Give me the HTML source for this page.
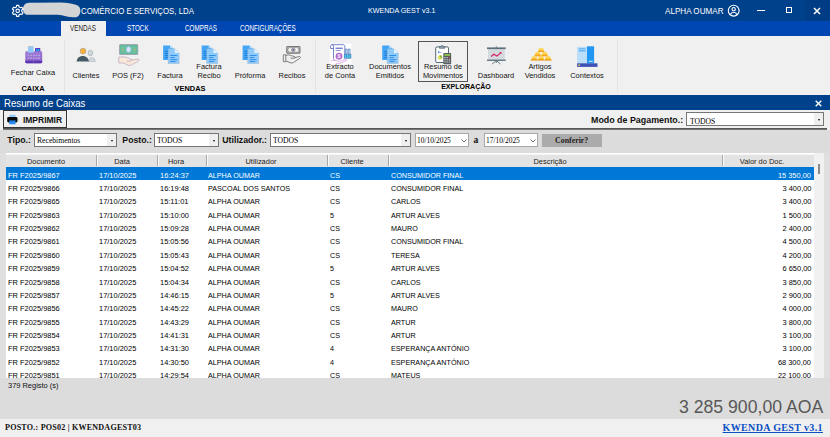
<!DOCTYPE html>
<html lang="pt">
<head>
<meta charset="utf-8">
<title>KWENDA GEST v3.1</title>
<style>
*{box-sizing:border-box;margin:0;padding:0}
html,body{width:830px;height:437px;overflow:hidden;background:#f0f0f0}
body{position:relative;font-family:"Liberation Sans",Arial,sans-serif;color:#1a1a1a}
.abs{position:absolute}
.t{position:absolute;white-space:nowrap;line-height:1}
#title{left:0;top:0;width:830px;height:21px;background:#00418b}
#tabs{left:0;top:21px;width:830px;height:15px;background:#0047b3}
#ribbon{left:0;top:36px;width:830px;height:59px;background:#f0f0f0}
#hdr2{left:0;top:95px;width:830px;height:15px;background:#00418b}
#tool{left:0;top:110px;width:830px;height:20px;background:#f0f0f0}
#filter{left:0;top:130px;width:830px;height:23px;background:#dcdcdc}
#tablewrap{left:0;top:153px;width:830px;height:225px;background:#dfdfdf;overflow:hidden}
#table{left:6px;top:0;width:807.6px;height:225px;background:#fff}
#foot{left:0;top:378px;width:830px;height:41px;background:#dcdcdc}
#status{left:0;top:419px;width:830px;height:18px;background:#f0f0f0}
.tt{color:#fff;font-size:8.5px;top:6.9px;transform-origin:0 50%;transform:scaleX(.925)}
.tab{color:#fff;font-size:8.7px;top:24.3px;transform-origin:0 0;transform:scaleX(.726)}
.rl{font-size:7.9px;color:#141414;text-align:center;line-height:9.4px;transform:translateX(-50%) scaleX(.945);white-space:nowrap;position:absolute}
.gl{font-size:8px;font-weight:bold;color:#000;position:absolute;white-space:nowrap;line-height:1;transform:translateX(-50%) scaleX(.925)}
.vsep{position:absolute;top:39px;height:54px;width:1px;background:#e4e4e4}
.row{position:absolute;left:0;width:807.6px;height:13.37px;font-size:8.1px;color:#000}
.row span{position:absolute;top:4.8px;white-space:nowrap;line-height:1;transform-origin:0 50%;transform:scaleX(.92)}
.row span.u{transform:scaleX(.888)}
.row .val{right:2.1px;transform-origin:100% 50%}
.row.sel{background:#0078d7;color:#fff}
.th{position:absolute;top:1px;height:13.6px;background:#e5e5e5;border-right:1px solid #fafafa;border-top:1px solid #f8f8f8;box-shadow:inset -1px 0 0 #c8c8c8}
.thl{position:absolute;top:157.6px;font-size:8.1px;color:#222;white-space:nowrap;line-height:1;transform:translateX(-50%) scaleX(.92)}
.combo{position:absolute;background:#fff;border:1px solid #767676;height:13.4px}
.combo.dt{border-color:#a8a8a8}
.combo .btn{position:absolute;right:0;top:0;bottom:0;width:9px;background:#efefef}
.combo .ct{position:absolute;left:1.8px;top:2.3px;font-family:"Liberation Serif","Times New Roman",serif;font-size:8.7px;line-height:1;color:#000;white-space:nowrap;transform-origin:0 50%;transform:scaleX(.88)}
.combo .arr{position:absolute;right:2.8px;top:5.4px;width:0;height:0;border-left:1.8px solid transparent;border-right:1.8px solid transparent;border-top:2.1px solid #111}
.fl{position:absolute;font-weight:bold;font-size:8.75px;color:#111;white-space:nowrap;line-height:1;top:135.8px}
</style>
</head>
<body>
<div class="abs" id="title"></div>
<div class="abs" id="tabs"></div>
<div class="abs" id="ribbon"></div>
<div class="abs" id="hdr2"></div>
<div class="abs" id="tool"></div>
<div class="abs" id="filter"></div>
<div class="abs" id="tablewrap"><div class="abs" id="table">
<div class="row sel" style="top:13.85px"><span style="left:1.6px">FR F2025/9867</span><span style="left:93px">17/10/2025</span><span style="left:154px">16:24:37</span><span class=u style="left:202.2px">ALPHA OUMAR</span><span class=u style="left:324px">CS</span><span class=u style="left:384.5px">CONSUMIDOR FINAL</span><span class="val">15 350,00</span></div>
<div class="row" style="top:27.22px"><span style="left:1.6px">FR F2025/9866</span><span style="left:93px">17/10/2025</span><span style="left:154px">16:19:48</span><span class=u style="left:202.2px">PASCOAL DOS SANTOS</span><span class=u style="left:324px">CS</span><span class=u style="left:384.5px">CONSUMIDOR FINAL</span><span class="val">3 400,00</span></div>
<div class="row" style="top:40.59px"><span style="left:1.6px">FR F2025/9865</span><span style="left:93px">17/10/2025</span><span style="left:154px">15:11:01</span><span class=u style="left:202.2px">ALPHA OUMAR</span><span class=u style="left:324px">CS</span><span class=u style="left:384.5px">CARLOS</span><span class="val">3 400,00</span></div>
<div class="row" style="top:53.96px"><span style="left:1.6px">FR F2025/9863</span><span style="left:93px">17/10/2025</span><span style="left:154px">15:10:00</span><span class=u style="left:202.2px">ALPHA OUMAR</span><span class=u style="left:324px">5</span><span class=u style="left:384.5px">ARTUR ALVES</span><span class="val">1 500,00</span></div>
<div class="row" style="top:67.33px"><span style="left:1.6px">FR F2025/9862</span><span style="left:93px">17/10/2025</span><span style="left:154px">15:09:28</span><span class=u style="left:202.2px">ALPHA OUMAR</span><span class=u style="left:324px">CS</span><span class=u style="left:384.5px">MAURO</span><span class="val">2 400,00</span></div>
<div class="row" style="top:80.70px"><span style="left:1.6px">FR F2025/9861</span><span style="left:93px">17/10/2025</span><span style="left:154px">15:05:56</span><span class=u style="left:202.2px">ALPHA OUMAR</span><span class=u style="left:324px">CS</span><span class=u style="left:384.5px">CONSUMIDOR FINAL</span><span class="val">4 500,00</span></div>
<div class="row" style="top:94.07px"><span style="left:1.6px">FR F2025/9860</span><span style="left:93px">17/10/2025</span><span style="left:154px">15:05:43</span><span class=u style="left:202.2px">ALPHA OUMAR</span><span class=u style="left:324px">CS</span><span class=u style="left:384.5px">TERESA</span><span class="val">4 200,00</span></div>
<div class="row" style="top:107.44px"><span style="left:1.6px">FR F2025/9859</span><span style="left:93px">17/10/2025</span><span style="left:154px">15:04:52</span><span class=u style="left:202.2px">ALPHA OUMAR</span><span class=u style="left:324px">5</span><span class=u style="left:384.5px">ARTUR ALVES</span><span class="val">6 650,00</span></div>
<div class="row" style="top:120.81px"><span style="left:1.6px">FR F2025/9858</span><span style="left:93px">17/10/2025</span><span style="left:154px">15:04:34</span><span class=u style="left:202.2px">ALPHA OUMAR</span><span class=u style="left:324px">CS</span><span class=u style="left:384.5px">CARLOS</span><span class="val">3 850,00</span></div>
<div class="row" style="top:134.18px"><span style="left:1.6px">FR F2025/9857</span><span style="left:93px">17/10/2025</span><span style="left:154px">14:46:15</span><span class=u style="left:202.2px">ALPHA OUMAR</span><span class=u style="left:324px">5</span><span class=u style="left:384.5px">ARTUR ALVES</span><span class="val">2 900,00</span></div>
<div class="row" style="top:147.55px"><span style="left:1.6px">FR F2025/9856</span><span style="left:93px">17/10/2025</span><span style="left:154px">14:45:22</span><span class=u style="left:202.2px">ALPHA OUMAR</span><span class=u style="left:324px">CS</span><span class=u style="left:384.5px">MAURO</span><span class="val">4 000,00</span></div>
<div class="row" style="top:160.92px"><span style="left:1.6px">FR F2025/9855</span><span style="left:93px">17/10/2025</span><span style="left:154px">14:43:29</span><span class=u style="left:202.2px">ALPHA OUMAR</span><span class=u style="left:324px">CS</span><span class=u style="left:384.5px">ARTUR</span><span class="val">3 800,00</span></div>
<div class="row" style="top:174.29px"><span style="left:1.6px">FR F2025/9854</span><span style="left:93px">17/10/2025</span><span style="left:154px">14:41:31</span><span class=u style="left:202.2px">ALPHA OUMAR</span><span class=u style="left:324px">CS</span><span class=u style="left:384.5px">ARTUR</span><span class="val">3 100,00</span></div>
<div class="row" style="top:187.66px"><span style="left:1.6px">FR F2025/9853</span><span style="left:93px">17/10/2025</span><span style="left:154px">14:31:30</span><span class=u style="left:202.2px">ALPHA OUMAR</span><span class=u style="left:324px">4</span><span class=u style="left:384.5px">ESPERANÇA ANTÓNIO</span><span class="val">3 100,00</span></div>
<div class="row" style="top:201.03px"><span style="left:1.6px">FR F2025/9852</span><span style="left:93px">17/10/2025</span><span style="left:154px">14:30:50</span><span class=u style="left:202.2px">ALPHA OUMAR</span><span class=u style="left:324px">4</span><span class=u style="left:384.5px">ESPERANÇA ANTÓNIO</span><span class="val">68 300,00</span></div>
<div class="row" style="top:214.40px"><span style="left:1.6px">FR F2025/9851</span><span style="left:93px">17/10/2025</span><span style="left:154px">14:29:54</span><span class=u style="left:202.2px">ALPHA OUMAR</span><span class=u style="left:324px">CS</span><span class=u style="left:384.5px">MATEUS</span><span class="val">22 100,00</span></div>
<div class="abs" style="left:0;top:0.6px;width:807.5px;height:13.3px;background:#e3e3e3;border-top:1px solid #f6f6f6"></div>
<div class="abs" style="left:89.7px;top:2.2px;width:1px;height:11px;background:#a8a8a8"></div><div class="abs" style="left:90.7px;top:2.2px;width:1px;height:11px;background:#fbfbfb"></div>
<div class="abs" style="left:151.0px;top:2.2px;width:1px;height:11px;background:#a8a8a8"></div><div class="abs" style="left:152.0px;top:2.2px;width:1px;height:11px;background:#fbfbfb"></div>
<div class="abs" style="left:199.5px;top:2.2px;width:1px;height:11px;background:#a8a8a8"></div><div class="abs" style="left:200.5px;top:2.2px;width:1px;height:11px;background:#fbfbfb"></div>
<div class="abs" style="left:321.0px;top:2.2px;width:1px;height:11px;background:#a8a8a8"></div><div class="abs" style="left:322.0px;top:2.2px;width:1px;height:11px;background:#fbfbfb"></div>
<div class="abs" style="left:382.0px;top:2.2px;width:1px;height:11px;background:#a8a8a8"></div><div class="abs" style="left:383.0px;top:2.2px;width:1px;height:11px;background:#fbfbfb"></div>
<div class="abs" style="left:715.5px;top:2.2px;width:1px;height:11px;background:#a8a8a8"></div><div class="abs" style="left:716.5px;top:2.2px;width:1px;height:11px;background:#fbfbfb"></div>
</div>
<div class="abs" style="left:813.6px;top:0;width:10.4px;height:225px;background:#f1f1f1"></div><div class="abs" style="left:824px;top:0;width:6px;height:225px;background:#dfdfdf"></div>
<div class="abs" style="left:818.1px;top:11px;width:1.8px;height:9.6px;background:#8a8a8a"></div>
</div>
<div class="abs" id="foot"></div>
<div class="abs" id="status"></div>

<!-- title bar -->
<svg class="abs" style="left:0;top:0" width="100" height="21" viewBox="0 0 100 21"><path d="M29 2.700L61 2.500C67 2.500 72 3.600 76.500 5C79.500 6 80.600 8.500 80.400 11C80.200 14 78.500 17 76 17.300C72.500 17.600 69 16.800 66 16.200C63 15.500 60.500 14.800 58 14.700L28 14.800C25 14.800 23 12.500 23 9C23 5.500 25.500 2.700 29 2.700Z" fill="#d3d4d6"/><path d="M19.07 6.88L18.77 5.35L16.63 5.35L16.33 6.88L14.94 7.68L13.47 7.18L12.41 9.03L13.58 10.05L13.58 11.65L12.41 12.67L13.47 14.52L14.94 14.02L16.33 14.82L16.63 16.35L18.77 16.35L19.07 14.82L20.46 14.02L21.93 14.52L22.99 12.67L21.82 11.65L21.82 10.05L22.99 9.03L21.93 7.18L20.46 7.68Z" fill="none" stroke="#fff" stroke-width="1.150" stroke-linejoin="round"/><circle cx="17.7" cy="10.85" r="1.750" fill="none" stroke="#fff" stroke-width="1.100"/></svg>
<div class="t tt" style="left:81px">COMÉRCIO E SERVIÇOS, LDA</div>
<div class="t tt" style="left:368.3px;font-size:7.7px;top:7.2px">KWENDA GEST v3.1</div>
<div class="t tt" style="left:664.8px;font-size:8.75px">ALPHA OUMAR</div>
<svg class="abs" style="left:727.2px;top:4.3px" width="13.4" height="13.4" viewBox="0 0 26 26" fill="none" stroke="#fff" stroke-width="2.2"><circle cx="13" cy="13" r="10.5"/><circle cx="13" cy="10" r="3.2"/><path d="M6.500 20.500c1.500-3.500 4-4.500 6.500-4.500s5 1 6.500 4.500"/></svg>
<div class="abs" style="left:756.6px;top:9.8px;width:8px;height:1.6px;background:#fff"></div>
<div class="abs" style="left:785.5px;top:7.4px;width:6.5px;height:6px;border:1.6px solid #fff"></div>
<div class="abs" style="left:804.5px;top:0;width:25.5px;height:21px;background:#003d85"></div>
<svg class="abs" style="left:813.2px;top:6.5px" width="8" height="8" viewBox="0 0 8 8" stroke="#fff" stroke-width="1.500"><path d="M1 1l6 6M7 1l-6 6"/></svg>

<!-- tabs -->
<div class="abs" style="left:61px;top:21px;width:45px;height:15px;background:#f0f0f0"></div>
<div class="t tab" style="left:70px;color:#222">VENDAS</div>
<div class="t tab" style="left:127px">STOCK</div>
<div class="t tab" style="left:184.500px">COMPRAS</div>
<div class="t tab" style="left:240px">CONFIGURAÇÕES</div>

<!-- ribbon -->
<div class="vsep" style="left:64px"></div>
<div class="vsep" style="left:315px"></div>
<div class="vsep" style="left:617px"></div>
<div class="rl" style="left:33px;top:68px">Fechar Caixa</div>
<div class="rl" style="left:85.500px;top:71px">Clientes</div>
<div class="rl" style="left:127.500px;top:71px">POS (F2)</div>
<div class="rl" style="left:170px;top:71px">Factura</div>
<div class="rl" style="left:209px;top:61.600px">Factura<br>Recibo</div>
<div class="rl" style="left:250px;top:71px">Próforma</div>
<div class="rl" style="left:291.500px;top:71px">Recibos</div>
<div class="rl" style="left:340px;top:61.600px">Extracto<br>de Conta</div>
<div class="rl" style="left:390px;top:61.600px">Documentos<br>Emitidos</div>
<div class="abs" style="left:418px;top:41px;width:50px;height:41px;border:1px solid #555"></div>
<div class="rl" style="left:443px;top:61.600px">Resumo de<br>Movimentos</div>
<div class="rl" style="left:495.500px;top:71px">Dashboard</div>
<div class="rl" style="left:540px;top:61.600px">Artigos<br>Vendidos</div>
<div class="rl" style="left:587px;top:70.500px">Contextos</div>
<div class="gl" style="left:33px;top:84.6px">CAIXA</div>
<div class="gl" style="left:189.5px;top:84.6px">VENDAS</div>
<div class="gl" style="left:466px;top:83.4px;transform:translateX(-50%) scaleX(.88)">EXPLORAÇÃO</div>
<svg class="abs" style="left:0;top:36px" width="830" height="58" viewBox="0 36 830 58">
<defs>
<g id="doc">
<path d="M0 0H7L10.100 2.900V14.700H0Z" fill="#42a5f5"/>
<path d="M7 0L10.100 2.900H7Z" fill="#bbdefb"/>
<path d="M2.100 5.900H5M2.100 8H5M2.100 10.100H5M2.100 12.200H5" stroke="#1976d2" stroke-width=".9"/>
<path d="M5 3.400H11.800L16 7.500V18.100H5Z" fill="#90caf9" stroke="#7fa6cc" stroke-width=".35"/>
<path d="M11.800 3.400L16 7.500H11.800Z" fill="#e3f2fd"/>
<path d="M7.200 10.100H14M7.200 12.200H11.600M7.200 14.300H14M7.200 16.200H12.500" stroke="#2f8fe8" stroke-width="1"/>
</g>
<linearGradient id="pg" x1="0" y1="0" x2="0" y2="1"><stop offset="0" stop-color="#9d7ad6"/><stop offset="1" stop-color="#8a62c9"/></linearGradient>
</defs>
<!-- cash register -->
<rect x="28" y="46.300" width="5.500" height="7" fill="#90caf9"/>
<rect x="28" y="46.100" width="5.500" height=".6" fill="#c9b8a8"/>
<rect x="35" y="48.100" width="5.300" height="4" rx=".6" fill="#5e35b1"/>
<rect x="35.900" y="48.900" width="3.600" height="2.200" fill="#2196f3"/>
<path d="M26.500 51.300H28V52.800H33.500V51.300H41C41.700 51.300 42.200 51.800 42.200 52.500V62C42.200 62.700 41.700 63.200 41 63.200H26.500C25.800 63.200 25.300 62.700 25.300 62V52.500C25.300 51.800 25.800 51.300 26.500 51.300Z" fill="url(#pg)"/>
<path d="M25.300 60.800H42.200V62C42.200 62.700 41.700 63.200 41 63.200H26.500C25.800 63.200 25.300 62.700 25.300 62Z" fill="#5e35b1"/>
<rect x="33.450" y="60.800" width=".5" height="2.400" fill="#9d7ad6"/>
<g fill="#b9a3e3"><rect x="27.500" y="54.600" width="1.700" height="1.600"/><rect x="30.200" y="54.600" width="1.700" height="1.600"/><rect x="32.900" y="54.600" width="1.700" height="1.600"/><rect x="35.600" y="54.600" width="1.700" height="1.600"/><rect x="38.300" y="54.600" width="1.700" height="1.600"/><rect x="27.500" y="57.400" width="1.700" height="1.600"/><rect x="30.200" y="57.400" width="1.700" height="1.600"/><rect x="32.900" y="57.400" width="1.700" height="1.600"/><rect x="35.600" y="57.400" width="1.700" height="1.600"/><rect x="38.300" y="57.400" width="1.700" height="1.600"/></g>
<!-- clientes -->
<path d="M88.500 61.500C88.500 59.300 90 57.600 91.800 57.600C93.800 57.600 95.300 59.300 95.300 61.500Z" fill="#cfd8dc" stroke="#9aa5ab" stroke-width=".4"/>
<ellipse cx="90.400" cy="53" rx="2.400" ry="2.800" fill="#cfd8dc" stroke="#8f989d" stroke-width=".5"/>
<path d="M76.600 61.600C76.600 58.300 79.300 55.900 82.700 55.900C86.100 55.900 88.800 58.300 88.800 61.600Z" fill="#455a64"/>
<circle cx="83" cy="51.100" r="2.900" fill="#fbb03b" stroke="#8f8f8f" stroke-width=".5"/>
<!-- POS -->
<rect x="119.500" y="44.500" width="18.300" height="10" rx=".6" fill="#69c1a1" stroke="#9b8aa6" stroke-width=".6"/>
<rect x="120.700" y="45.600" width="15.900" height="7.800" fill="none" stroke="#4fa98a" stroke-width=".5" stroke-dasharray="1 .6"/>
<ellipse cx="128.600" cy="49.500" rx="2.300" ry="3" fill="#d6e6ff" stroke="#8fb0dd" stroke-width=".5"/>
<circle cx="122.600" cy="49.800" r=".8" fill="#e8a24a"/><circle cx="134.800" cy="49.800" r=".8" fill="#e8a24a"/>
<path d="M118.800 57.100L124.500 56.900C126.500 57 128 58 129.500 58.700C130.500 59.200 131.800 59.300 132.200 60L137.500 59.200C138.600 59 139.300 59.800 139 60.500C138.800 61 138.400 61.200 137.800 61.500L130.500 65.400C129.600 65.800 128.800 65.600 128 65.200L123.500 63L118.800 63Z" fill="#f9e8d8" stroke="#a590b3" stroke-width=".55" stroke-linejoin="round"/><path d="M132.200 60C131.500 61 129 61.300 126.800 61.200" fill="none" stroke="#a97fc0" stroke-width=".55"/>
<!-- docs -->
<use href="#doc" x="163.100" y="45.400"/>
<use href="#doc" x="201.700" y="45.400"/>
<use href="#doc" x="242.600" y="45.400"/>
<use href="#doc" x="382.200" y="45.400"/>
<!-- recibos -->
<g fill="none" stroke="#5a5a5a" stroke-width=".75">
<rect x="286.700" y="46.500" width="13.300" height="6.800" rx=".4" fill="#b4b4b4"/>
<rect x="287.900" y="47.600" width="10.900" height="4.600" rx="2.200" stroke-width=".4" fill="#f4f4f4"/>
<ellipse cx="293.300" cy="49.900" rx="1.900" ry="1.700" stroke-width=".5" fill="#c9c9c9"/>
<rect x="283.300" y="54.700" width="2.500" height="7" rx=".4"/>
<path d="M285.800 55.500C287.500 54.800 289 54.700 290.500 55.400C292 56 294 56.200 294.800 56.700C295.500 57.300 295 58.200 294 58.200H290.500M294.800 57.800L298.500 56.600C299.800 56.200 300.600 56.700 300.500 57.500C300.400 58 299.500 58.600 298 59.400L293.500 62.500C292.700 63.100 291.700 63.200 290.800 62.900L285.800 61"/>
</g>
<circle cx="293.300" cy="49.900" r=".8" fill="#3949ab"/>
<!-- extracto -->
<rect x="329.800" y="43.600" width="21.600" height="20.600" fill="#fff"/>
<g fill="none" stroke-width=".7">
<path d="M333.500 58.500V46.200C333.500 45.200 332.800 44.700 332 44.700C331.200 44.700 330.600 45.300 330.600 46.200V48.500H333.500" stroke="#3f51b5"/>
<path d="M332 44.700H343.200C344.200 44.700 344.800 45.400 344.800 46.300V58" stroke="#3f51b5"/>
<path d="M335.500 48.200H342.800" stroke="#3f51b5" stroke-width="1"/><path d="M335.500 50.500H340.500" stroke="#5c6bc0"/>
<path d="M333.500 58.500C333.500 59.300 334 59.800 334.800 59.800" stroke="#7e57c2"/>
<path d="M330.800 61.200C333 60 335.500 60.200 337.500 61C339 61.500 341 61.300 342.500 60.600L346.500 58.900M335.500 63.300C338 63.800 341 63.300 343.500 62L347.200 59.800" stroke="#ce7fd6" stroke-width=".6"/>
</g>
<circle cx="339" cy="56.200" r="3.100" fill="#bf7fd6" stroke="#9c3fb8" stroke-width=".6"/>
<text x="339" y="58.100" font-size="5" font-weight="bold" text-anchor="middle" fill="#f3e5f5" font-family="Liberation Sans,sans-serif">$</text>
<path d="M344.300 54.200H351V58.300H344.300Z" fill="#4dd0e1" stroke="#3f51b5" stroke-width=".5"/>
<path d="M345.400 49H347.200V54.200H345.400ZM348.300 49H350.100V54.200H348.300Z" fill="#b2ebf2" stroke="#3f51b5" stroke-width=".5"/>
<path d="M346.500 54.800V57.800M348.800 54.800V57.800" stroke="#3f51b5" stroke-width=".5"/>
<!-- resumo de movimentos -->
<rect x="435.700" y="46.900" width="12.800" height="15.600" rx="1.200" fill="#fff" stroke="#455a64" stroke-width=".9"/>
<path d="M439.500 48.300V46.600H440.800C440.800 45.200 443.400 45.200 443.400 46.600H444.700V48.300Z" fill="#90a4ae" stroke="#455a64" stroke-width=".6"/>
<path d="M438.500 51.200V53M439.800 51.800V53M441 52.400V53" stroke="#1e6fe0" stroke-width=".8"/>
<circle cx="440" cy="57.400" r="2.200" fill="#d4e157"/><path d="M440 57.400V55.200A2.200 2.200 0 0 1 442.200 57.400Z" fill="#7cb342"/>
<rect x="443.300" y="53" width="7.800" height="11.300" rx=".8" fill="#555b5e"/>
<rect x="444.300" y="54" width="5.800" height="1.900" fill="#8bc34a"/>
<g fill="#cfd4d6"><rect x="444.300" y="57" width="1.300" height="1.200"/><rect x="446.500" y="57" width="1.300" height="1.200"/><rect x="444.300" y="59.200" width="1.300" height="1.200"/><rect x="446.500" y="59.200" width="1.300" height="1.200"/><rect x="448.700" y="59.200" width="1.300" height="1.200"/><rect x="444.300" y="61.400" width="1.300" height="1.200"/><rect x="446.500" y="61.400" width="1.300" height="1.200"/><rect x="448.700" y="61.400" width="1.300" height="1.200"/></g>
<rect x="448.700" y="57" width="1.300" height="1.200" fill="#e53935"/>
<!-- dashboard -->
<path d="M496.300 60.500L492.200 64M496.300 60.500L500.500 64M496.300 60.500V63" stroke="#455a64" stroke-width=".8" fill="none"/>
<rect x="495.800" y="46.500" width="1" height="1.200" fill="#455a64"/>
<rect x="488" y="48.800" width="16.800" height="11.200" fill="#d3dade"/>
<rect x="487" y="47.400" width="18.700" height="1.700" fill="#5a717c"/>
<rect x="487" y="59.600" width="18.700" height="1.300" fill="#5a717c"/>
<path d="M491.100 56.400L493.900 54.300L496.900 56.100L500.600 52.900" fill="none" stroke="#d81b60" stroke-width="1.200"/>
<path d="M499.300 52.200L501.600 52L501.300 54.300Z" fill="#d81b60"/>
<!-- gold bars -->
<g stroke="#fff8e1" stroke-width=".35">
<path d="M539.100 48.100H543.200L544.500 52.100H537.800Z" fill="#fbc02d"/>
<path d="M535.600 52.100H539.800L541.100 56.300H534.300Z" fill="#fbc02d"/>
<path d="M542.500 52.100H546.700L548 56.300H541.200Z" fill="#fbc02d"/>
<path d="M532.100 56.300H536.300L537.700 60.400H530.800Z" fill="#fbc02d"/>
<path d="M539 56.300H543.200L544.600 60.400H537.700Z" fill="#fbc02d"/>
<path d="M545.900 56.300H550.100L551.600 60.400H544.600Z" fill="#fbc02d"/>
</g>
<g fill="#ffe27a">
<path d="M539.300 48.300H543L543.400 49.500H538.900Z"/><path d="M535.800 52.300H539.600L540 53.500H535.400Z"/><path d="M542.700 52.300H546.500L546.900 53.500H542.300Z"/>
<path d="M532.300 56.500H536.100L536.500 57.700H531.900Z"/><path d="M539.200 56.500H543L543.400 57.700H538.800Z"/><path d="M546.100 56.500H549.900L550.300 57.700H545.700Z"/>
</g>
<g fill="#f59f1a">
<path d="M537.800 52.100L538.100 51H544.200L544.500 52.100Z"/><path d="M534.300 56.300L534.600 55.200H540.800L541.100 56.300Z"/><path d="M541.200 56.300L541.500 55.200H547.700L548 56.300Z"/>
<path d="M530.800 60.400L531.100 59.300H537.400L537.700 60.400Z"/><path d="M537.700 60.400L538 59.300H544.300L544.600 60.400Z"/><path d="M544.600 60.400L544.900 59.300H551.300L551.600 60.400Z"/>
</g>
<rect x="530.800" y="60.400" width="20.800" height=".5" fill="#c9b48a" opacity=".7"/>
<!-- contextos -->
<rect x="577.100" y="46.800" width="10.100" height="16.600" fill="#bbdefb"/>
<rect x="578.800" y="48.100" width="6.800" height="1.200" fill="#64b5f6"/><rect x="578.800" y="50" width="6.800" height="1.500" fill="#64b5f6"/>
<rect x="587" y="46.300" width="7.100" height="17.100" fill="#2196f3"/>
<rect x="588.900" y="60.800" width="3.800" height=".9" fill="#e3f2fd"/>
<rect x="577.100" y="63.300" width="20.400" height="3.600" fill="#3f51b5"/>
<circle cx="579.100" cy="65.100" r=".9" fill="#ffd54f"/>
</svg>


<!-- section header -->
<div class="t" style="left:4px;top:98.6px;font-size:10.4px;color:#fff;transform-origin:0 50%;transform:scaleX(.927)">Resumo de Caixas</div>
<svg class="abs" style="left:814.8px;top:99.7px" width="7" height="7" viewBox="0 0 7 7" stroke="#fff" stroke-width="1.400"><path d="M.7.7l5.600 5.600M6.300.7L.7 6.300"/></svg>

<!-- toolbar -->
<div class="abs" style="left:3px;top:127.6px;width:824px;height:2.6px;background:linear-gradient(#505050,#606060 60%,#9a9a9a)"></div>
<div class="abs" style="left:3px;top:110.3px;width:63.6px;height:18px;border:1px solid #333;background:#efefef"></div><div class="abs" style="left:66.6px;top:110.3px;width:1px;height:17.4px;background:#fafafa"></div>
<div class="t" style="left:22.9px;top:115.6px;font-size:8.5px;font-weight:bold;color:#111">IMPRIMIR</div>
<svg class="abs" style="left:0;top:110px" width="30" height="20" viewBox="0 110 30 20"><rect x="9.300" y="114.800" width="6.200" height="2.600" fill="#90caf9"/><rect x="7.200" y="117.100" width="10.300" height="5.300" rx="1.300" fill="#0a0a0a"/><rect x="9.300" y="120.600" width="6.200" height="3.700" fill="#2a8cf0"/><rect x="9.300" y="120.600" width="6.200" height=".8" fill="#1565c0"/></svg>
<div class="t" style="left:591px;top:116.1px;font-size:8.9px;font-weight:bold;color:#111">Modo de Pagamento.:</div>
<div class="combo" style="left:686.2px;top:112.2px;width:137.6px;height:14px"><span class="ct" style="left:2.8px;top:4px">TODOS</span><span class="btn"></span><span class="arr"></span></div>

<!-- filter row -->
<div class="fl" style="left:7.3px">Tipo.:</div>
<div class="combo" style="left:34px;top:133.2px;width:83px"><span class="ct">Recebimentos</span><span class="btn"></span><span class="arr"></span></div>
<div class="fl" style="left:122.3px">Posto.:</div>
<div class="combo" style="left:154px;top:133.2px;width:65px"><span class="ct">TODOS</span><span class="btn"></span><span class="arr"></span></div>
<div class="fl" style="left:222.3px">Utilizador.:</div>
<div class="combo" style="left:270px;top:133.2px;width:141px"><span class="ct">TODOS</span><span class="btn"></span><span class="arr"></span></div>
<div class="combo dt" style="left:415px;top:133.2px;width:53.5px"><span class="ct" style="left:1.1px;transform:scaleX(.855)">10/10/2025</span></div>
<svg class="abs" style="left:461px;top:139.2px" width="6" height="4" viewBox="0 0 6 4" fill="none" stroke="#444" stroke-width=".8"><path d="M.5.5l2.500 2.500L5.500.5"/></svg>
<div class="t" style="left:473.4px;top:135.4px;font-size:9.6px;font-weight:bold;font-family:'Liberation Serif',serif;color:#111">a</div>
<div class="combo dt" style="left:484px;top:133.2px;width:53.5px"><span class="ct" style="left:1.1px;transform:scaleX(.855)">17/10/2025</span></div>
<svg class="abs" style="left:529.5px;top:139.2px" width="6" height="4" viewBox="0 0 6 4" fill="none" stroke="#444" stroke-width=".8"><path d="M.5.5l2.500 2.500L5.500.5"/></svg>
<div class="abs" style="left:541.7px;top:133.5px;width:60.2px;height:13.5px;background:#ababab"></div>
<div class="t" style="left:555px;top:137px;font-size:7.9px;font-weight:bold;font-family:'Liberation Serif',serif;color:#1e1e1e">Conferir?</div>

<!-- table header labels -->
<div class="thl" style="left:45.500px">Documento</div>
<div class="thl" style="left:121.500px">Data</div>
<div class="thl" style="left:175.500px">Hora</div>
<div class="thl" style="left:261px">Utilizador</div>
<div class="thl" style="left:352px">Cliente</div>
<div class="thl" style="left:549.500px">Descrição</div>
<div class="thl" style="left:761.500px">Valor do Doc.</div>

<!-- footer -->
<div class="t" style="left:7.500px;top:381.6px;font-size:8.1px;color:#111;transform-origin:0 50%;transform:scaleX(.92)">379 Registo (s)</div>
<div class="t" style="left:679px;top:399.4px;font-size:17.65px;color:#585858">3 285 900,00 AOA</div>
<div class="t" style="left:5px;top:423.6px;font-size:8.1px;font-weight:bold;font-family:'Liberation Serif',serif;color:#111;letter-spacing:.2px">POSTO.: POS02 | KWENDAGEST03</div>
<div class="t" style="left:722.6px;top:423.3px;font-size:10px;font-weight:bold;font-family:'Liberation Serif',serif;color:#0a4fc4;text-decoration:underline;letter-spacing:.36px">KWENDA GEST v3.1</div>
</body>
</html>
